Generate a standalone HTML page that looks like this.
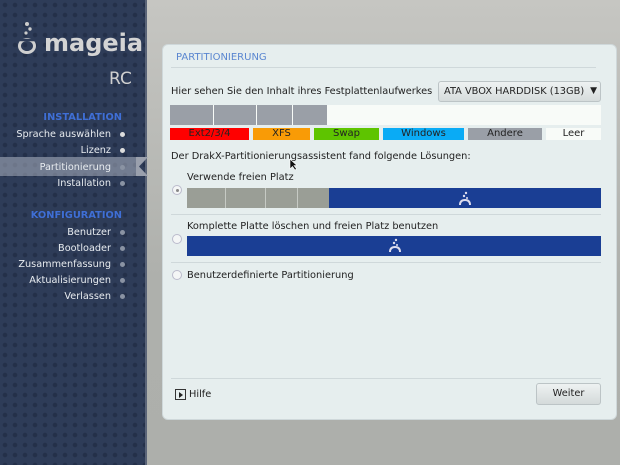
<!DOCTYPE html>
<html><head><meta charset="utf-8"><style>
*{margin:0;padding:0;box-sizing:border-box}
body{width:620px;height:465px;overflow:hidden;position:relative;font-family:"DejaVu Sans","Liberation Sans",sans-serif;font-size:9.8px;color:#222;background:linear-gradient(#c6c6c2,#aeb0ac 60%,#adafab)}
.abs{position:absolute}
#side{left:0;top:0;width:147px;height:465px;background-color:#2e3c58;background-image:radial-gradient(circle,#243049 2px,transparent 2.6px);background-size:10px 10px;border-right:2px solid #5a6478}
.it{position:absolute;right:34px;color:#e8ecf0;font-size:9.7px;white-space:nowrap}
.dot{position:absolute;left:119px;width:5px;height:5px;border-radius:50%;background:#ddd}
.dot.g{background:#8a93a3}
.hd{position:absolute;right:23px;color:#3f6fd6;font-weight:bold;font-size:9.8px}
#panel{left:162px;top:44px;width:455px;height:376px;background:#e6eeee;border-radius:6px;border:1px solid #cfd8da}
.seg{position:absolute;top:0;height:100%;background:#9a9fa7}
.lg{position:absolute;top:128px;height:12px;font-size:10px;text-align:center;line-height:12px;color:#222}
.line{position:absolute;height:1px;background:#cfd8da}
.radio{position:absolute;width:10px;height:10px;border-radius:50%;border:1px solid #bbc;background:#f4f6f6}
.blue{position:absolute;background:#1a3e94}
.gs{position:absolute;top:0;height:100%;background:#9a9e96;border-right:1px solid #c6cac4}
</style></head><body>
<div id="side" class="abs">
<svg class="abs" style="left:15px;top:21px" width="30" height="34"><circle cx="12" cy="3" r="2" fill="#ccc"/><circle cx="15" cy="8" r="1.7" fill="#ccc"/><circle cx="11" cy="12" r="1.6" fill="#ccc"/><ellipse cx="12" cy="25" rx="7.5" ry="6.5" fill="none" stroke="#d0d0d0" stroke-width="3"/><path d="M5 19 L19 19" stroke="#2e3c58" stroke-width="2.5"/></svg>
<div class="abs" style="left:44px;top:28px;font-size:24px;font-weight:bold;color:#d4d4d4;line-height:30px">mageia</div>
<div class="abs" style="left:109px;top:69px;font-size:17px;color:#d0d0d0">RC</div>
<div class="hd" style="top:112px">INSTALLATION</div>
<div class="it" style="top:129px">Sprache auswählen</div><div class="dot" style="top:132px;left:120px"></div>
<div class="it" style="top:145px">Lizenz</div><div class="dot" style="top:148px;left:120px"></div>
<div class="abs" style="left:0;top:157px;width:138px;height:19px;background:rgba(200,205,215,0.45)"></div>
<svg class="abs" style="left:136px;top:157px" width="12" height="19"><path d="M12 0 L0 0 L0 19 L12 19 L3 9.5Z" fill="#9aa0ad"/></svg>
<div class="it" style="top:162px">Partitionierung</div><div class="dot g" style="top:165px;left:120px"></div>
<div class="it" style="top:178px">Installation</div><div class="dot g" style="top:181px;left:120px"></div>
<div class="hd" style="top:210px">KONFIGURATION</div>
<div class="it" style="top:227px">Benutzer</div><div class="dot g" style="top:230px;left:120px"></div>
<div class="it" style="top:243px">Bootloader</div><div class="dot g" style="top:246px;left:120px"></div>
<div class="it" style="top:259px">Zusammenfassung</div><div class="dot g" style="top:262px;left:120px"></div>
<div class="it" style="top:275px">Aktualisierungen</div><div class="dot g" style="top:278px;left:120px"></div>
<div class="it" style="top:291px">Verlassen</div><div class="dot g" style="top:294px;left:120px"></div>
</div>
<div id="panel" class="abs"></div>
<div class="abs" style="left:176px;top:52px;color:#5a86d0;font-size:10px">PARTITIONIERUNG</div>
<div class="line" style="left:171px;top:67px;width:425px"></div>
<div class="abs" style="left:171px;top:86px">Hier sehen Sie den Inhalt ihres Festplattenlaufwerkes</div>
<div class="abs" style="left:438px;top:81px;width:163px;height:21px;border:1px solid #bcc4c6;border-radius:3px;background:linear-gradient(#eef2f2,#d6dcdc);padding:4px 0 0 5px">ATA VBOX HARDDISK (13GB)<span style="position:absolute;right:3px;top:4px;font-size:9px">▼</span></div>
<div class="abs" style="left:170px;top:105px;width:431px;height:20px;background:#f8fbf8">
<div class="seg" style="left:0;width:43px"></div><div class="seg" style="left:44px;width:42px"></div><div class="seg" style="left:87px;width:35px"></div><div class="seg" style="left:123px;width:34px"></div></div>
<div class="lg" style="left:170px;width:79px;background:#f00">Ext2/3/4</div>
<div class="lg" style="left:253px;width:57px;background:#f99b06">XFS</div>
<div class="lg" style="left:314px;width:65px;background:#5ec400">Swap</div>
<div class="lg" style="left:383px;width:81px;background:#0aabf5">Windows</div>
<div class="lg" style="left:468px;width:74px;background:#9a9fa7">Andere</div>
<div class="lg" style="left:546px;width:55px;background:#f8fbf8">Leer</div>
<div class="abs" style="left:171px;top:151px">Der DrakX-Partitionierungsassistent fand folgende Lösungen:</div>
<svg class="abs" style="left:289px;top:158px" width="9" height="13"><path d="M1 1 L1 11 L3.5 8.5 L6 12 L7.5 11 L5 7.5 L8 7.5Z" fill="#111" stroke="#fff" stroke-width=".6"/></svg>
<div class="abs" style="left:187px;top:172px">Verwende freien Platz</div>
<div class="radio" style="left:172px;top:185px"><div style="margin:2.5px;width:3px;height:3px;border-radius:50%;background:#888"></div></div>
<div class="blue" style="left:187px;top:188px;width:414px;height:20px">
<div class="gs" style="left:0;width:39px"></div><div class="gs" style="left:39px;width:40px"></div><div class="gs" style="left:79px;width:32px"></div><div class="gs" style="left:111px;width:31px;border:none"></div></div>
<svg class="abs" style="left:457px;top:191px" width="16" height="16"><circle cx="9" cy="2" r="1.2" fill="#dde"/><circle cx="7" cy="5" r="1.2" fill="#dde"/><circle cx="10" cy="7" r="1" fill="#dde"/><path d="M3 14 Q3 9 8 9 Q13 9 13 14" fill="none" stroke="#dde" stroke-width="2"/></svg>
<div class="line" style="left:171px;top:214px;width:430px"></div>
<div class="abs" style="left:187px;top:221px">Komplette Platte löschen und freien Platz benutzen</div>
<div class="radio" style="left:172px;top:234px"></div>
<div class="blue" style="left:187px;top:236px;width:414px;height:20px"></div>
<svg class="abs" style="left:387px;top:238px" width="16" height="16"><circle cx="9" cy="2" r="1.2" fill="#dde"/><circle cx="7" cy="5" r="1.2" fill="#dde"/><circle cx="10" cy="7" r="1" fill="#dde"/><path d="M3 14 Q3 9 8 9 Q13 9 13 14" fill="none" stroke="#dde" stroke-width="2"/></svg>
<div class="line" style="left:171px;top:262px;width:430px"></div>
<div class="radio" style="left:172px;top:270px"></div>
<div class="abs" style="left:187px;top:270px">Benutzerdefinierte Partitionierung</div>
<div class="line" style="left:171px;top:378px;width:430px"></div>
<div class="abs" style="left:175px;top:389px;width:11px;height:11px;border:1px solid #333"><div style="margin:2px 0 0 3px;width:0;height:0;border-left:4px solid #222;border-top:3px solid transparent;border-bottom:3px solid transparent"></div></div>
<div class="abs" style="left:189px;top:389px">Hilfe</div>
<div class="abs" style="left:536px;top:383px;width:65px;height:22px;border:1px solid #bcc4c6;border-radius:3px;background:linear-gradient(#eef2f2,#d4dada);text-align:center;line-height:20px">Weiter</div>
</body></html>
